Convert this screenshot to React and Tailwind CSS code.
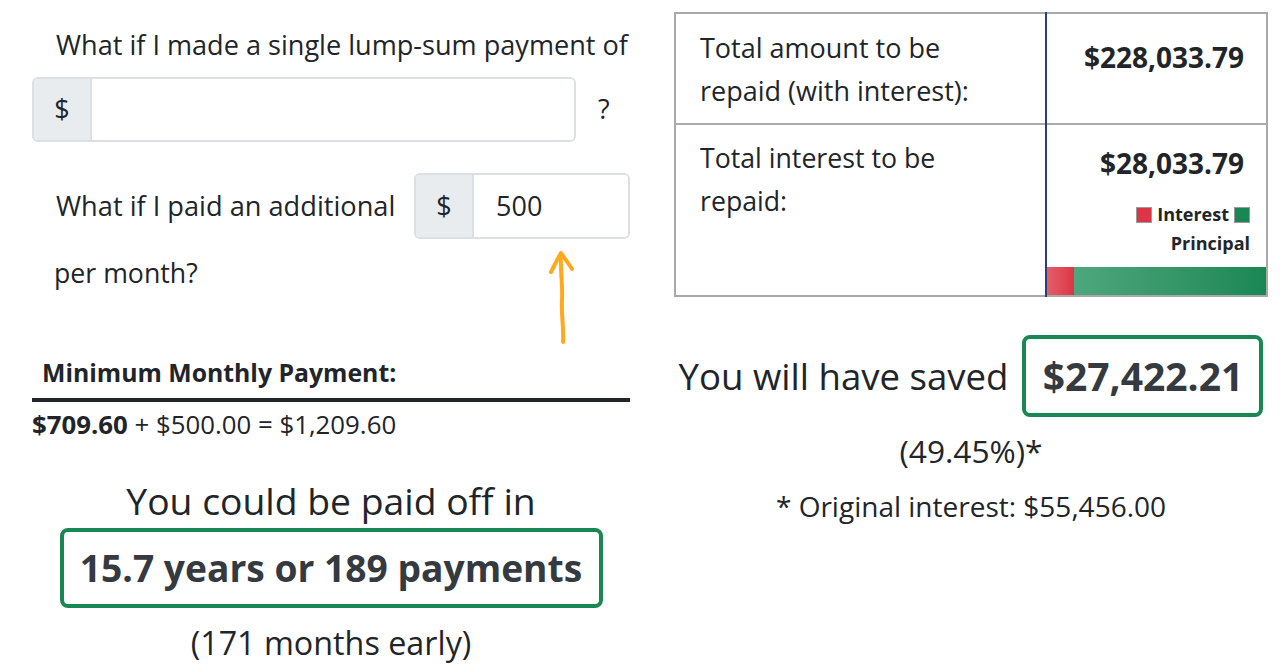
import React from 'react';

const font = { fontFamily: '"Open Sans", "Noto Sans", sans-serif' };

const Arrow = () => (
    <svg className="absolute left-[512px] top-[248px]" width="36" height="98" viewBox="0 0 36 98" fill="none">
        <path d="M19 94 C 20 80, 17 66, 18 52 C 19 38, 16 22, 17 6" stroke="#ffa91f" strokeWidth="4" strokeLinecap="round" />
        <path d="M7 24 C 11 16, 14 10, 17 5 C 21 11, 25 16, 28 21" stroke="#ffa91f" strokeWidth="4" strokeLinecap="round" strokeLinejoin="round" />
    </svg>
);

const InputGroup = ({ value, className }) => (
    <div className={`flex rounded-[6px] border-2 border-[#dcdfe3] overflow-hidden ${className}`}>
        <div className="w-[58px] shrink-0 bg-[#e9ecef] border-r-2 border-[#dcdfe3] flex items-center justify-center text-[27px] text-[#212529]">$</div>
        <div className="flex-1 bg-white flex items-center pl-[22px] text-[27px] text-[#212529]">{value}</div>
    </div>
);

export default function App() {
    return (
        <div className="w-[1280px] h-[665px] bg-white overflow-hidden flex text-[#212529] whitespace-nowrap" style={font}>

            {/* Left column */}
            <div className="relative w-[598px] ml-[32px] pt-[24px] flex flex-col">
                <p className="pl-[24px] text-[27.1px] leading-[42px]">What if I made a single lump-sum payment of</p>

                <div className="flex items-center mt-[11px]">
                    <InputGroup value="" className="w-[544px] h-[65px]" />
                    <span className="ml-[22px] text-[27px]">?</span>
                </div>

                <div className="flex items-center mt-[31px]">
                    <span className="pl-[24px] text-[27.2px] leading-[42px]">What if I paid an additional</span>
                    <InputGroup value="500" className="ml-auto w-[216px] h-[66px]" />
                </div>

                <p className="pl-[22px] mt-[13px] text-[26.7px] leading-[42px]">per month?</p>

                <Arrow />

                <p className="pl-[10px] mt-[60px] text-[24.8px] leading-[36px] font-bold">Minimum Monthly Payment:</p>
                <div className="mt-[8px] border-t-4 border-[#212529]" />
                <p className="mt-[4px] text-[25.8px] leading-[36px]">
                    <span className="font-bold">$709.60</span> + $500.00 = $1,209.60
                </p>

                <p className="mt-[33px] text-center text-[37.3px] leading-[52px]">You could be paid off in</p>
                <div className="mt-[1px] mx-auto w-[543px] h-[80px] border-4 border-[#198754] rounded-[8px] flex items-center justify-center">
                    <span className="text-[37.2px] font-bold text-[#343a40]">15.7 years or 189 payments</span>
                </div>
                <p className="mt-[11px] text-center text-[32.3px] leading-[46px]">(171 months early)</p>
            </div>

            {/* Right column */}
            <div className="w-[594px] ml-[44px] pt-[12px] flex flex-col">
                <table className="w-full border-collapse border-2 border-[#a9a9a9]">
                    <tbody>
                        <tr className="h-[111px] border-b-2 border-[#a9a9a9]">
                            <td className="w-[371px] align-top pl-[24px] pt-[12px] text-[27px] leading-[43px] border-r-2 border-[#23427a]">
                                Total amount to be<br />repaid (with interest):
                            </td>
                            <td className="align-top text-right pr-[22px] pt-[22px] text-[28px] leading-[42px] font-bold">$228,033.79</td>
                        </tr>
                        <tr className="h-[172px]">
                            <td className="align-top pl-[24px] pt-[11px] text-[26.7px] leading-[43px] border-r-2 border-[#23427a]">
                                Total interest to be<br />repaid:
                            </td>
                            <td className="align-top p-0 h-[172px]">
                                <div className="h-full flex flex-col">
                                    <div className="text-right pr-[22px] pt-[17px] text-[28px] leading-[42px] font-bold">$28,033.79</div>
                                    <div className="flex justify-end pr-[16px] mt-[16px]">
                                        <div className="w-[124px] text-right text-[18px] leading-[29px] font-bold">
                                            <span className="inline-block w-[16px] h-[16px] bg-[#dc3545] border border-[#999] align-[-2px] mr-[5px]" />
                                            Interest
                                            <span className="inline-block w-[16px] h-[16px] bg-[#198754] border border-[#999] align-[-2px] ml-[5px]" />
                                            <br />Principal
                                        </div>
                                    </div>
                                    <div className="mt-auto flex h-[28px]">
                                        <div className="w-[12.3%] bg-gradient-to-r from-[#e35d6a] to-[#dc3545]" />
                                        <div className="flex-1 bg-gradient-to-r from-[#4da77d] to-[#198754]" />
                                    </div>
                                </div>
                            </td>
                        </tr>
                    </tbody>
                </table>

                <div className="mt-[38px] flex items-center justify-center">
                    <span className="text-[36.6px] leading-[60px]">You will have saved</span>
                    <div className="ml-[14px] w-[241px] h-[82px] border-4 border-[#198754] rounded-[8px] flex items-center justify-center">
                        <span className="text-[39px] font-bold text-[#343a40]">$27,422.21</span>
                    </div>
                </div>
                <p className="mt-[8px] text-center text-[31.7px] leading-[52px]">(49.45%)*</p>
                <p className="mt-[8px] text-center text-[28px] leading-[42px]">* Original interest: $55,456.00</p>
            </div>
        </div>
    );
}
